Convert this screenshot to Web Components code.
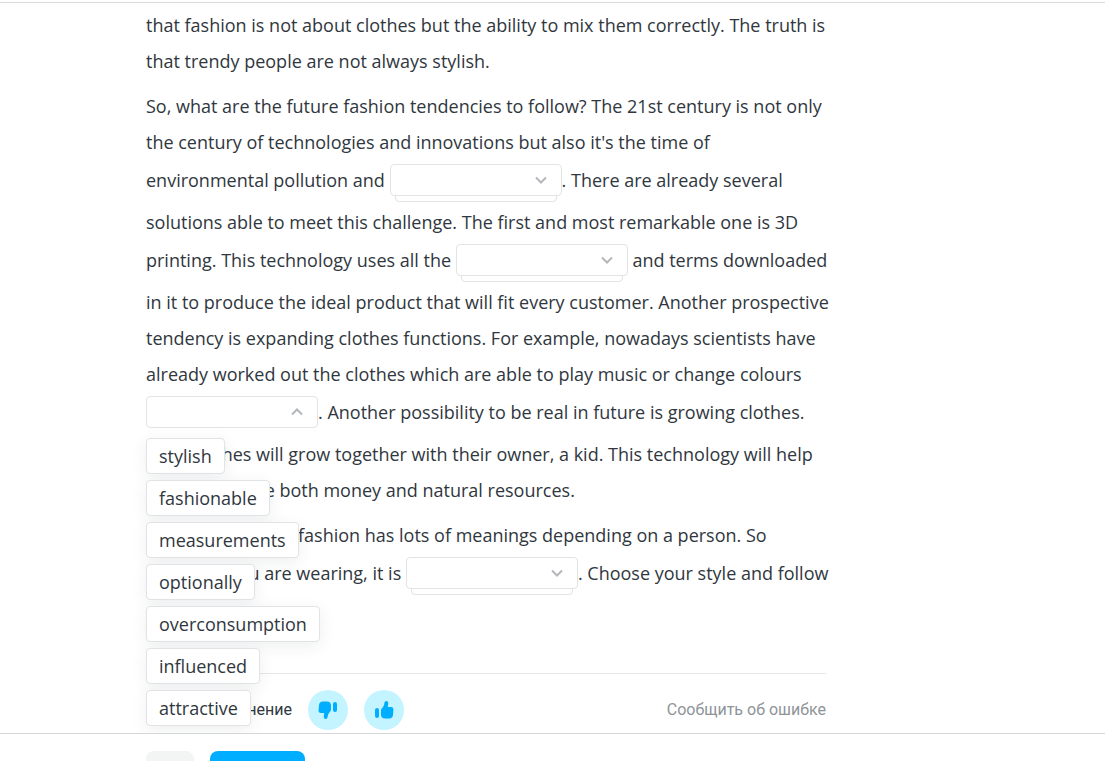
<!DOCTYPE html>
<html lang="en">
<head>
	<meta charset="utf-8">
	<meta name="viewport" content="width=device-width, initial-scale=1">
	<title>Fashion</title>
	<style>
		body {
			margin: 0;
			background: #fff;
			color: #30373e;
			font: 18px/36px "Open Sans", sans-serif;
		}

		p {
			margin: 0 0 9px;
			white-space: nowrap;
		}
	</style>
</head>
<body>
	<lesson-page>
		<lesson-text>
			<p>
				that fashion is not about clothes but the ability to mix them correctly. The truth is<br>
				that trendy people are not always stylish.
			</p>
			<p>
				So, what are the future fashion tendencies to follow? The 21st century is not only<br>
				the century of technologies and innovations but also it's the time of<br>
				environmental pollution and <word-gap label="Gap 1"></word-gap>. There are already several<br>
				solutions able to meet this challenge. The first and most remarkable one is 3D<br>
				printing. This technology uses all the <word-gap label="Gap 2"></word-gap> and terms downloaded<br>
				in it to produce the ideal product that will fit every customer. Another prospective<br>
				tendency is expanding clothes functions. For example, nowadays scientists have<br>
				already worked out the clothes which are able to play music or change colours<br>
				<word-gap label="Gap 3" open></word-gap>. Another possibility to be real in future is growing clothes.<br>
				Such clothes will grow together with their owner, a kid. This technology will help<br>
				parents to save both money and natural resources.
			</p>
			<p>
				In conclusion, the fashion has lots of meanings depending on a person. So<br>
				whatever you are wearing, it is <word-gap label="Gap 4"></word-gap>. Choose your style and follow<br>
				your heart.
			</p>
		</lesson-text>
		<lesson-feedback>Ваше мнение</lesson-feedback>
		<lesson-bar slot="bar"></lesson-bar>
	</lesson-page>

	<script>
		const WORDS = ['stylish', 'fashionable', 'measurements', 'optionally', 'overconsumption', 'influenced', 'attractive'];

		class LessonPage extends HTMLElement {
			constructor() {
				super();

				this.attachShadow({mode: 'open'}).innerHTML = `
					<style>
						:host {
							display: flex;
							flex-direction: column;
							height: 100vh;
							overflow: hidden;
						}
						header {
							flex: none;
							height: 2px;
							border-bottom: 1px solid #d9dbdd;
						}
						main {
							flex: 1;
							min-height: 0;
							overflow: hidden;
							padding: 4px 279px 0 146px;
						}
					</style>
					<header></header>
					<main><slot></slot></main>
					<slot name="bar"></slot>
				`;
			}
		}

		class LessonText extends HTMLElement {
			constructor() {
				super();

				this.attachShadow({mode: 'open'}).innerHTML = `
					<style>
						:host {
							display: block;
							padding-bottom: 31px;
						}
					</style>
					<slot></slot>
				`;
			}
		}

		class WordGap extends HTMLElement {
			constructor() {
				super();

				let shadowRoot = this.attachShadow({mode: 'open'});
				let open = this.hasAttribute('open');

				shadowRoot.innerHTML = `
					<style>
						:host {
							display: inline-block;
							position: relative;
							width: 172px;
							height: 32px;
							margin: 4px 0 8px;
							vertical-align: middle;
							line-height: 24px;
						}
						select {
							appearance: none;
							display: block;
							position: relative;
							box-sizing: border-box;
							width: 100%;
							height: 32px;
							margin: 0;
							padding: 0 36px 0 12px;
							border: 1px solid #e1e3e5;
							border-radius: 4px;
							background: #fff;
							color: inherit;
							font: inherit;
						}
						.stack {
							position: absolute;
							inset: 20px 5px -6px;
							border: 1px solid #e1e3e5;
							border-radius: 4px;
						}
						svg {
							position: absolute;
							top: 10px;
							right: 14px;
							pointer-events: none;
						}
						:host([open]) svg {
							transform: rotate(180deg);
						}
						.words {
							position: absolute;
							z-index: 1;
							top: 42px;
							left: 0;
							display: flex;
							flex-direction: column;
							align-items: flex-start;
							gap: 6px;
						}
						.words[hidden] {
							display: none;
						}
						.words button {
							height: 36px;
							padding: 0 12px;
							border: 1px solid #e1e3e5;
							border-radius: 4px;
							background: #fff;
							box-shadow: 0 4px 16px rgba(40, 50, 60, .08);
							color: inherit;
							font: inherit;
							cursor: pointer;
						}
					</style>
					${open ? '' : '<div class="stack"></div>'}
					<select aria-label="${this.getAttribute('label')}">
						<option></option>
						${WORDS.map(word => `<option>${word}</option>`).join('')}
					</select>
					<svg width="14" height="12" viewBox="0 0 14 12" fill="none" stroke="#b4b7ba" stroke-width="2" aria-hidden="true">
						<path d="M2 3.5l5 5 5-5"/>
					</svg>
					${open ? `<div class="words">
						${WORDS.map(word => `<button type="button">${word}</button>`).join('')}
					</div>` : ''}
				`;

				let select = shadowRoot.querySelector('select');

				for(let button of shadowRoot.querySelectorAll('button')) {
					button.addEventListener('click', () => {
						select.value = button.textContent;
						shadowRoot.querySelector('.words').hidden = true;
					});
				}
			}
		}

		class LessonFeedback extends HTMLElement {
			constructor() {
				super();

				this.attachShadow({mode: 'open'}).innerHTML = `
					<style>
						:host {
							display: flex;
							align-items: center;
							gap: 16px;
							padding-top: 16px;
							border-top: 1px solid #e6e8e9;
							font: 16px/24px Roboto, sans-serif;
						}
						.label {
							width: 146px;
							text-align: right;
							white-space: nowrap;
						}
						button {
							display: flex;
							align-items: center;
							justify-content: center;
							width: 40px;
							height: 40px;
							padding: 0;
							border: 0;
							border-radius: 50%;
							background: #c3f4ff;
							color: #00aeff;
							cursor: pointer;
						}
						.down svg {
							transform: rotate(180deg);
						}
						a {
							margin-left: auto;
							color: #8e9499;
							text-decoration: none;
						}
					</style>
					<span class="label"><slot></slot></span>
					${['down', 'up'].map(name => `
						<button type="button" class="${name}" aria-label="${name}">
							<svg width="20" height="20" viewBox="0 0 20 20" fill="currentColor" aria-hidden="true">
								<rect x="1" y="8" width="4" height="10" rx="2"/>
								<path d="M7 10.500c0-1 .4-1.700 1.200-2.400C9.400 6.800 10 5.500 10.300 3.500 10.500 1.900 11.200 1 12.200 1c1.500 0 2.200 1.200 2 2.800L13.800 7H17c1.700 0 2.600 1.100 2.400 2.800l-.4 5.200c-.2 2.300-1.500 3.500-3.800 3.500H11c-2.500 0-4-1.400-4-3.800z"/>
							</svg>
						</button>
					`).join('')}
					<a href="#">Сообщить об ошибке</a>
				`;
			}
		}

		class LessonBar extends HTMLElement {
			constructor() {
				super();

				this.attachShadow({mode: 'open'}).innerHTML = `
					<style>
						:host {
							display: flex;
							flex: none;
							gap: 16px;
							box-sizing: border-box;
							height: 28px;
							padding: 17px 146px 0;
							border-top: 1px solid #d4d6d8;
							background: #fff;
						}
						button {
							flex: none;
							width: 48px;
							height: 48px;
							padding: 0;
							border: 0;
							border-radius: 8px;
							background: #f3f5f5;
						}
						.next {
							width: 95px;
							background: #00aeff;
						}
					</style>
					<button type="button" aria-label="Back"></button>
					<button type="button" class="next" aria-label="Next"></button>
				`;
			}
		}

		customElements.define('lesson-page', LessonPage);
		customElements.define('lesson-text', LessonText);
		customElements.define('word-gap', WordGap);
		customElements.define('lesson-feedback', LessonFeedback);
		customElements.define('lesson-bar', LessonBar);
	</script>
</body>
</html>
